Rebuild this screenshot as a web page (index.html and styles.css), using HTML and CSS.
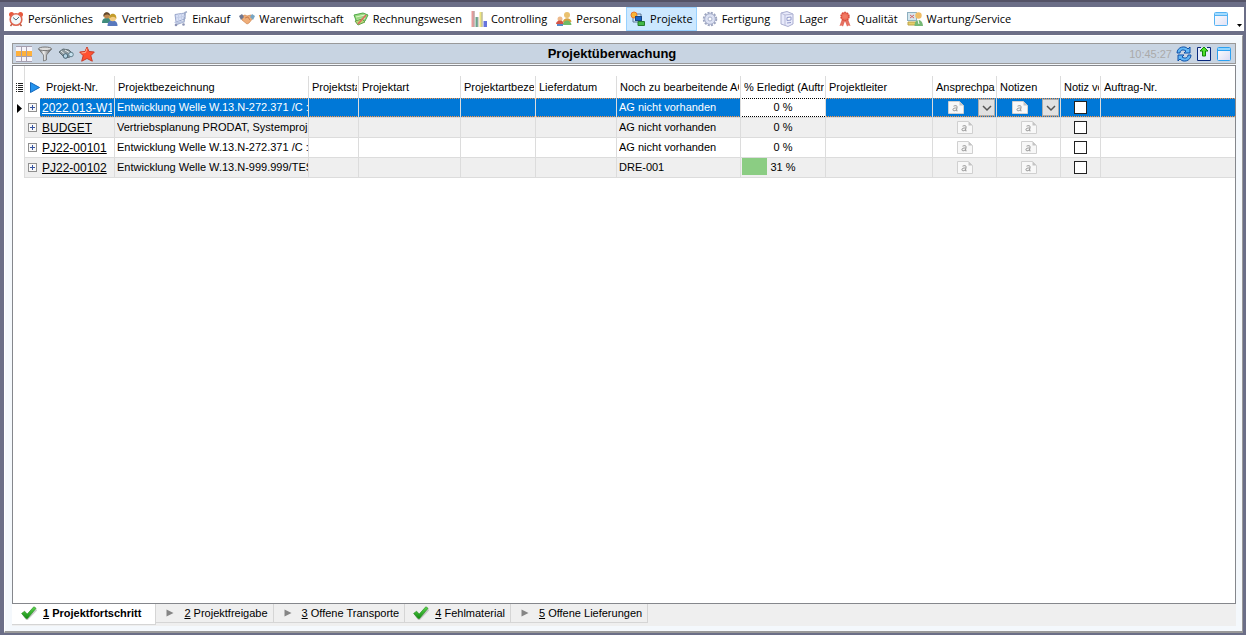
FILE: index.html
```
<!DOCTYPE html>
<html lang="de">
<head>
<meta charset="utf-8">
<title>Projektüberwachung</title>
<link rel="stylesheet" href="styles.css">
</head>
<body>
<svg class="defs" aria-hidden="true">
  <defs>
    <linearGradient id="paper" x1="0" y1="0" x2="1" y2="1"><stop offset="0" stop-color="#fff"/><stop offset="1" stop-color="#d9daf3"/></linearGradient>
    <linearGradient id="metal" x1="0" x2="1"><stop offset="0" stop-color="#555"/><stop offset=".4" stop-color="#eee"/><stop offset="1" stop-color="#444"/></linearGradient>
    <linearGradient id="green" x1="0" y1="0" x2="0" y2="1"><stop offset="0" stop-color="#5fd84f"/><stop offset="1" stop-color="#128a12"/></linearGradient>
    <symbol id="window" viewBox="0 0 16 16"><rect x="1.500" y="1.500" width="13" height="13" rx="1" fill="url(#paper)" stroke="#2ba0f0"/><path d="M2 2h12v2H2z" fill="#8fd4ff"/><path d="M2 4.500h12" stroke="#2ba0f0"/></symbol>
    <symbol id="note" viewBox="0 0 16 13"><path d="M.5.5h11l4 4v8H.5z" fill="#f8f8f8" stroke="#d0d0d0"/><path d="M11.500.5v4h4z" fill="#c4c4c4"/><path d="M5.500 5.200c2-1 4-.6 3.600 1l-.7 3.600M8.800 7c-2-.2-4 .3-3.900 1.800.2 1.600 2.800 1.200 3.700-.5M8.400 9.800h1.200" fill="none" stroke="#999"/></symbol>
    <symbol id="check" viewBox="0 0 16 14"><path d="M2 8l4 5.500 9.500-10" fill="none" stroke="#999" stroke-width="2" opacity=".5"/><path d="M.6 7.400l3-2.200 2.600 2.900L12.800.8l2.300 1.400-8.600 10.400H5z" fill="url(#green)" stroke="#238a1c" stroke-width=".6"/></symbol>
    <symbol id="arrow" viewBox="0 0 8 8"><path d="M.5.5l7 3.500-7 3.500z" fill="#858585"/></symbol>
    <symbol id="chevron" viewBox="0 0 10 8"><path d="M1 2l4 4 4-4" fill="none" stroke="#555" stroke-width="1.500"/></symbol>
    <symbol id="plus" viewBox="0 0 9 9"><rect x=".5" y=".5" width="8" height="8" fill="#f8f8f8" stroke="#909090"/><path d="M2 4.500h5M4.500 2v5" stroke="#3855a0"/></symbol>
  </defs>
</svg>

<nav class="menubar">
  <button class="menu-item"><svg class="icon" viewBox="0 0 16 16"><circle cx="3.500" cy="3.500" r="2.500" fill="#e8583c"/><circle cx="12.500" cy="3.500" r="2.500" fill="#e8583c"/><path d="M4 13l-1.500 2M12 13l1.500 2" stroke="#b95940" stroke-width="1.500"/><circle cx="8" cy="8.500" r="5.800" fill="#f3f8fa" stroke="#df6651" stroke-width="1.600"/><path d="M5 6.500L8 9l3-3" fill="none" stroke="#4b6d7d"/></svg>Persönliches</button>
  <button class="menu-item"><svg class="icon" viewBox="0 0 16 16"><path d="M0 12c0-4 2-5 5-5s4 2 4 5z" fill="#3f8b7c"/><circle cx="4.800" cy="4.500" r="3" fill="#c08a50"/><path d="M1.500 6c-1-6 7-6 6.500-1-2-2-5-2-6.500 1" fill="#62492e"/><path d="M5.500 15c0-4 2-5.500 5-5.500s5 1.500 5 5.500z" fill="#5878bd"/><circle cx="10.800" cy="6.800" r="3.400" fill="#f2cb83"/><path d="M7.300 8c-1-7 8-7 7 0-1.500-3-5-3-7 0" fill="#c39c2b"/></svg>Vertrieb</button>
  <button class="menu-item"><svg class="icon" viewBox="0 0 16 16"><path d="M3 3.500L13 2v6l-9 3z" fill="#d7dff5" stroke="#99a6cb"/><path d="M15 .8l-2 .8-1 9-8 3" fill="none" stroke="#9eabc9" stroke-width="1.500"/><path d="M6.500 3v7M9.500 2.500v7M4 7l9-2" fill="none" stroke="#c4cee8"/><path d="M2 11l8-1 3 1-9 2z" fill="#bcc6e2"/><circle cx="4" cy="14" r="1.300" fill="#8d94b4"/><circle cx="11.500" cy="13.500" r="1.300" fill="#8d94b4"/></svg>Einkauf</button>
  <button class="menu-item"><svg class="icon" viewBox="0 0 16 16"><path d="M3 5l3-1 2 1 4-1 2 3-4 5-2 1-5-4z" fill="#efae79" stroke="#cf8550" stroke-width=".7"/><path d="M0 5l3-2 2 3-3 3z" fill="#6f7893"/><path d="M16 5l-3-2-2 3 3 3z" fill="#77a6c4"/><path d="M6 7l3-1 2 3" stroke="#b96a40" fill="none" stroke-width=".7"/></svg>Warenwirtschaft</button>
  <button class="menu-item"><svg class="icon" viewBox="0 0 16 16"><path d="M1 4l9-2 5 2-3 6-8 2z" fill="#9ad880" stroke="#51a94a"/><path d="M3 6l9-2M4 9l8-2" stroke="#dbf7c9"/><path d="M2 10l3 4 7-3-3-3z" fill="#b8d779" stroke="#62a24a"/><path d="M5 13l8-9" stroke="#e0685c" stroke-width="1.500"/></svg>Rechnungswesen</button>
  <button class="menu-item"><svg class="icon" viewBox="0 0 16 16"><path d="M.5 0h3v16h-3z" fill="#e99a9a"/><path d="M4.500 6h2.500v10H4.500z" fill="#6aa68d"/><path d="M8.500 1h3v15h-3z" fill="#eee57d"/><path d="M12.500 10H16v6h-3.500z" fill="#6674dc"/><path d="M3 0v16M7 6v10M11 1v15" stroke="#a8a8a8"/></svg>Controlling</button>
  <button class="menu-item"><svg class="icon" viewBox="0 0 16 16"><circle cx="11" cy="4" r="3" fill="#eac16e"/><path d="M7 11c0-5 8-5 8.500 0z" fill="#d6a341"/><circle cx="4" cy="8" r="2.500" fill="#edba8b"/><path d="M0 13c0-4 7-5 8 0z" fill="#d55445"/><path d="M7 14c0-6 8-6 8.500 0z" fill="#6fba67"/><path d="M1 14h6" stroke="#5787c9" stroke-width="2"/></svg>Personal</button>
  <button class="menu-item active"><svg class="icon" viewBox="0 0 16 16"><path d="M3 5v6h6M5 3h6v5" fill="none" stroke="#607996"/><circle cx="4" cy="4" r="3" fill="#f9b637" stroke="#e8762d"/><rect x="5.500" y="5.500" width="6" height="4" fill="#1761c6" stroke="#174785"/><path d="M8 10.500h6.500v4H8z" fill="#42b847" stroke="#267c2d"/></svg>Projekte</button>
  <button class="menu-item"><svg class="icon" viewBox="0 0 16 16"><circle cx="8" cy="8" r="6" fill="none" stroke="#9da5c0" stroke-width="2.500" stroke-dasharray="2 1.140"/><circle cx="8" cy="8" r="5.300" fill="#dce1f3" stroke="#a9b1cc"/><circle cx="8" cy="8" r="2" fill="#fff" stroke="#a9b1cc"/></svg>Fertigung</button>
  <button class="menu-item"><svg class="icon" viewBox="0 0 16 16"><path d="M2 2l6-1.500L14 3v10l-5 2.500L2 13z" fill="#e8eafb" stroke="#aaaed0"/><path d="M2 2l4 2 8-1M6 4v10" fill="none" stroke="#b8bbd9"/><path d="M8 6.500l4-.5v3l-4 .5zM8 12l4-.5" fill="#fff" stroke="#9299c9"/></svg>Lager</button>
  <button class="menu-item"><svg class="icon" viewBox="0 0 16 16"><path d="M5 8l-2.500 7 2-.5 1.500 1L8 10l2 5.500 1.500-1 2 .5L11 8z" fill="#e57061"/><circle cx="8" cy="5.500" r="4" fill="#ef705b" stroke="#d84b3b" stroke-width="1.500" stroke-dasharray="1.800 .7"/><circle cx="8" cy="5.500" r="2" fill="#f07c66"/></svg>Qualität</button>
  <button class="menu-item"><svg class="icon" viewBox="0 0 16 16"><rect x=".5" y="1.500" width="9" height="8" fill="#d5e6ed" stroke="#8eafc0"/><path d="M3 4l4 3M7 4L3 7" stroke="#d56565"/><path d="M1 11h8v3H1z" fill="#e7cf6b" stroke="#bba248"/><circle cx="11.500" cy="4.500" r="3.200" fill="#efbd66"/><path d="M7.500 15c0-8 8-8 8.500 0z" fill="#76b875"/><path d="M11 9l1 4" stroke="#fff"/></svg>Wartung/Service</button>
  <span class="menu-end">
    <button class="icon-btn" aria-label="Fenster"><svg class="icon faded"><use href="#window"/></svg></button>
    <button class="more" aria-label="Weitere"><svg class="more-icon" viewBox="0 0 5 3"><path d="M0 0h5L2.500 3z"/></svg></button>
  </span>
</nav>

<main class="panel">
  <header class="titlebar">
    <div class="tools">
      <button class="icon-btn" aria-label="Tabelle"><svg class="icon" viewBox="0 0 16 16"><path d="M0 0h16v16H0z" fill="#a5a0b0"/><path d="M0 1h5v4H0zM6 1h4v4H6zM11 1h5v4h-5zM0 11h5v4H0zM6 11h4v4H6zM11 11h5v4h-5z" fill="#f5f3fa"/><path d="M0 5h5v5H0zM6 5h4v5H6zM11 5h5v5h-5z" fill="#ffb13b"/></svg></button>
      <button class="icon-btn" aria-label="Filter"><svg class="icon" viewBox="0 0 16 16"><path d="M1.500 3L6.500 9v6l3-1V9l5-6z" fill="url(#metal)" stroke="#666" stroke-width=".7"/><ellipse cx="8" cy="2.800" rx="6.500" ry="1.800" fill="#ddd" stroke="#777"/></svg></button>
      <button class="icon-btn" aria-label="Suchen"><svg class="icon" viewBox="0 0 16 16"><path d="M1 6l4-3 6 1 4 4-3 3-5 1z" fill="#8d999e" stroke="#5c6b72"/><path d="M3 5l6 5M7 4l5 3" stroke="#e9eef0"/><circle cx="7.500" cy="10" r="2.300" fill="#b5d4e4" stroke="#496777"/><circle cx="13" cy="8.500" r="2.300" fill="#c8e3f0" stroke="#658290"/></svg></button>
      <button class="icon-btn" aria-label="Favorit"><svg class="icon" viewBox="0 0 16 16"><path d="M8 1l2 4.500 5.300.5-3.500 3.700 1.500 5.500L8 12.500l-5.300 2.700 1.500-5.500L.7 6 6 5.500z" fill="#ff5130" stroke="#c83c28"/><path d="M8 2.500L6.500 6.500 2.500 7" fill="none" stroke="#ffad91"/></svg></button>
    </div>
    <h1 class="title">Projektüberwachung</h1>
    <div class="tools right">
      <time class="clock">10:45:27</time>
      <button class="icon-btn" aria-label="Aktualisieren"><svg class="icon" viewBox="0 0 16 16"><path d="M1 7c0-6 8-8 11-4l2-2v6H8l2-2C7 3 4 4 4 7z" fill="#62b7f5" stroke="#0c4fa8"/><path d="M15 9c0 6-8 8-11 4l-2 2V9h6l-2 2c3 2 6 1 6-2z" fill="#62b7f5" stroke="#0c4fa8"/></svg></button>
      <button class="icon-btn" aria-label="Exportieren"><svg class="icon" viewBox="0 0 16 16"><path d="M5 1.500H1.500v13h13v-13H11" fill="#e4eafa" stroke="#08287c"/><path d="M8 1l4 4H9.500v5h-3V5H4z" fill="#4de02a" stroke="#118409"/></svg></button>
      <button class="icon-btn" aria-label="Maximieren"><svg class="icon"><use href="#window"/></svg></button>
    </div>
  </header>

  <section class="grid">
    <table class="projects">
      <colgroup><col class="c-gutter"><col class="c-tree"><col class="c-nr"><col class="c-name"><col class="c-state"><col class="c-type"><col class="c-typename"><col class="c-date"><col class="c-open"><col class="c-done"><col class="c-lead"><col class="c-note"><col class="c-note"><col class="c-flag"><col></colgroup>
      <thead>
        <tr>
          <th class="gutter"><svg class="list-icon" viewBox="0 0 7 9"><path d="M0 .5h1M2 .5h5M0 2.500h1M2 2.500h5M0 4.500h1M2 4.500h5M0 6.500h1M2 6.500h5M0 8.500h1M2 8.500h5" stroke="#222"/></svg></th>
          <th colspan="2"><div class="head first"><svg class="play" viewBox="0 0 10 11"><path d="M.5.5l9 5-9 5z" fill="#2493ee" stroke="#1268bd"/></svg>Projekt-Nr.</div></th>
          <th><div class="head">Projektbezeichnung</div></th>
          <th><div class="head">Projektstatus</div></th>
          <th><div class="head">Projektart</div></th>
          <th><div class="head">Projektartbezeichnung</div></th>
          <th><div class="head">Lieferdatum</div></th>
          <th><div class="head">Noch zu bearbeitende AG</div></th>
          <th><div class="head">% Erledigt (Auftrag)</div></th>
          <th><div class="head">Projektleiter</div></th>
          <th><div class="head">Ansprechpartner</div></th>
          <th><div class="head">Notizen</div></th>
          <th><div class="head">Notiz vorhanden</div></th>
          <th class="last"><div class="head">Auftrag-Nr.</div></th>
        </tr>
      </thead>
      <tbody>
        <tr class="selected">
          <td class="gutter"><svg class="row-mark" viewBox="0 0 5 9"><path d="M0 0l5 4.500L0 9z"/></svg></td>
          <td class="tree"><button class="expand" aria-label="Aufklappen"><svg class="plus"><use href="#plus"/></svg></button></td>
          <td><div class="cell key"><a class="nr" href="#">2022.013-W13</a></div></td>
          <td><div class="cell">Entwicklung Welle W.13.N-272.371 /C :</div></td>
          <td></td><td></td><td></td><td></td>
          <td><div class="cell">AG nicht vorhanden</div></td>
          <td class="done">0 %</td>
          <td></td>
          <td><div class="editor"><svg class="note"><use href="#note"/></svg><button class="drop" aria-label="Ansprechpartner"><svg class="chevron"><use href="#chevron"/></svg></button></div></td>
          <td><div class="editor"><svg class="note"><use href="#note"/></svg><button class="drop" aria-label="Notizen"><svg class="chevron"><use href="#chevron"/></svg></button></div></td>
          <td class="center"><input class="box" type="checkbox" aria-label="Notiz vorhanden"></td>
          <td class="end"></td>
        </tr>
        <tr class="alt">
          <td class="gutter"></td>
          <td class="tree"><button class="expand" aria-label="Aufklappen"><svg class="plus"><use href="#plus"/></svg></button></td>
          <td><div class="cell key"><a class="nr" href="#">BUDGET</a></div></td>
          <td><div class="cell">Vertriebsplanung PRODAT, Systemproj</div></td>
          <td></td><td></td><td></td><td></td>
          <td><div class="cell">AG nicht vorhanden</div></td>
          <td class="done">0 %</td>
          <td></td>
          <td class="center"><svg class="note"><use href="#note"/></svg></td>
          <td class="center"><svg class="note"><use href="#note"/></svg></td>
          <td class="center"><input class="box" type="checkbox" aria-label="Notiz vorhanden"></td>
          <td class="end"></td>
        </tr>
        <tr>
          <td class="gutter"></td>
          <td class="tree"><button class="expand" aria-label="Aufklappen"><svg class="plus"><use href="#plus"/></svg></button></td>
          <td><div class="cell key"><a class="nr" href="#">PJ22-00101</a></div></td>
          <td><div class="cell">Entwicklung Welle W.13.N-272.371 /C :</div></td>
          <td></td><td></td><td></td><td></td>
          <td><div class="cell">AG nicht vorhanden</div></td>
          <td class="done">0 %</td>
          <td></td>
          <td class="center"><svg class="note"><use href="#note"/></svg></td>
          <td class="center"><svg class="note"><use href="#note"/></svg></td>
          <td class="center"><input class="box" type="checkbox" aria-label="Notiz vorhanden"></td>
          <td class="end"></td>
        </tr>
        <tr class="alt">
          <td class="gutter"></td>
          <td class="tree"><button class="expand" aria-label="Aufklappen"><svg class="plus"><use href="#plus"/></svg></button></td>
          <td><div class="cell key"><a class="nr" href="#">PJ22-00102</a></div></td>
          <td><div class="cell">Entwicklung Welle W.13.N-999.999/TES</div></td>
          <td></td><td></td><td></td><td></td>
          <td><div class="cell">DRE-001</div></td>
          <td class="done"><div class="progress"><div class="bar" style="width:31%"></div><span class="percent">31 %</span></div></td>
          <td></td>
          <td class="center"><svg class="note"><use href="#note"/></svg></td>
          <td class="center"><svg class="note"><use href="#note"/></svg></td>
          <td class="center"><input class="box" type="checkbox" aria-label="Notiz vorhanden"></td>
          <td class="end"></td>
        </tr>
      </tbody>
    </table>
  </section>

  <nav class="tabs">
    <button class="tab current"><svg class="check"><use href="#check"/></svg><span><u>1</u> Projektfortschritt</span></button>
    <button class="tab"><svg class="arrow"><use href="#arrow"/></svg><span><u>2</u> Projektfreigabe</span></button>
    <button class="tab"><svg class="arrow"><use href="#arrow"/></svg><span><u>3</u> Offene Transporte</span></button>
    <button class="tab checked"><svg class="check"><use href="#check"/></svg><span><u>4</u> Fehlmaterial</span></button>
    <button class="tab"><svg class="arrow"><use href="#arrow"/></svg><span><u>5</u> Offene Lieferungen</span></button>
  </nav>
</main>
</body>
</html>
```
FILE: styles.css
```
* { box-sizing: border-box; }
body {
  margin: 0;
  height: 100vh;
  padding: 5px 2px 2px 4px;
  display: flex;
  flex-direction: column;
  gap: 4px;
  background: #6b6e87;
  border-top: 2px solid #545366;
  font: 11px/14px "Liberation Sans", Arial, sans-serif;
  color: #000;
  overflow: hidden;
}
button { margin: 0; padding: 0; border: 0; background: none; font: inherit; color: inherit; }
svg { display: block; flex: none; }
.defs { position: absolute; width: 0; height: 0; }
.icon { width: 16px; height: 16px; }
.icon-btn { display: flex; }

.menubar {
  display: flex;
  align-items: center;
  gap: 1px;
  height: 24px;
  background: #fff;
  font: 11px/16px "Open Sans", "Noto Sans", sans-serif;
}
.menu-item {
  display: flex;
  align-items: center;
  gap: 4px;
  height: 24px;
  padding: 0 3px;
  border: 1px solid transparent;
  white-space: nowrap;
}
.menu-item.active { background: #cce8ff; border-color: #99d1ff; }
.menu-end { display: flex; align-items: center; margin-left: auto; gap: 8px; padding-right: 2px; }
.faded { opacity: .8; }
.more { align-self: flex-end; }
.more-icon { width: 5px; height: 3px; }

.panel {
  flex: 1;
  display: flex;
  flex-direction: column;
  margin-right: 1px;
  padding: 7px 6px 5px 7px;
  background: #f4f8fc;
  border: 1px solid #fff;
  border-right-color: #999;
  border-bottom: 2px solid #999;
}
.titlebar {
  display: grid;
  grid-template-columns: 1fr auto 1fr;
  align-items: center;
  height: 21px;
  padding: 0 3px;
  background: #c8d4e2;
  border: 1px solid #999;
}
.title { margin: 0; padding-right: 24px; font-size: 13px; line-height: 18px; font-weight: bold; }
.tools { display: flex; align-items: center; gap: 5px; }
.right { justify-content: flex-end; gap: 4px; }
.clock { color: #aaa; }

.grid {
  flex: 1;
  margin-top: 1px;
  background: #fff;
  border: 1px solid #85878c;
  overflow: hidden;
}
.projects { width: 100%; table-layout: fixed; border-collapse: separate; border-spacing: 0; }
.c-gutter { width: 12px; }
.c-tree { width: 15px; }
.c-nr { width: 75px; }
.c-name { width: 194px; }
.c-state { width: 50px; }
.c-type { width: 102px; }
.c-typename { width: 75px; }
.c-date { width: 81px; }
.c-open { width: 124px; }
.c-done { width: 85px; }
.c-lead { width: 107px; }
.c-note { width: 64px; }
.c-flag { width: 40px; }
th {
  height: 32px;
  padding: 0;
  font-weight: normal;
  text-align: left;
  vertical-align: bottom;
  background: linear-gradient(#dcdcdc, #dcdcdc) right bottom / 1px 22px no-repeat;
}
th.last { background: none; }
.head {
  height: 22px;
  margin: 0 2px 0 3px;
  line-height: 22px;
  white-space: nowrap;
  overflow: hidden;
}
.first { display: flex; align-items: center; gap: 6px; padding-left: 2px; }
.play { width: 10px; height: 11px; }
td {
  height: 20px;
  padding: 0;
  border-right: 1px solid #dcdcdc;
  border-bottom: 1px solid #dcdcdc;
  overflow: hidden;
  white-space: nowrap;
}
.alt td { background: #efefef; }
.projects .end { border-right: 0; }
.projects .gutter { background: #fff; border-right: 1px solid #dcdcdc; border-bottom: 0; }
th.gutter { padding: 0 0 6px 3px; }
.list-icon { width: 7px; height: 9px; }
.row-mark { width: 5px; height: 9px; margin-left: 4px; }
.projects .tree { border-right: 0; }
.expand { display: flex; margin-left: 3px; }
.plus { width: 9px; height: 9px; }
.cell { margin: 0 0 2px 2px; overflow: hidden; }
.key { margin: 0 2px; }
.nr { color: inherit; font-size: 12px; line-height: 16px; }
.selected {
  color: #fff;
  background-color: #0078d7;
  background-image: linear-gradient(90deg, #ff9440 50%, transparent 50%), linear-gradient(90deg, #ff9440 50%, transparent 50%);
  background-size: 2px 1px;
  background-position: 1px 0, 1px 18px;
  background-repeat: repeat-x;
}
.selected .tree { background: #fff; }
.selected .done {
  color: #000;
  background-color: #fff;
  background-image: linear-gradient(90deg, #000 50%, transparent 50%), linear-gradient(90deg, #000 50%, transparent 50%);
  background-size: 2px 1px;
  background-position: 1px 0, 1px 18px;
  background-repeat: repeat-x;
}
.done { padding-bottom: 2px; text-align: center; }
.progress { display: flex; align-items: center; height: 17px; margin: 0 1px; }
.bar { height: 17px; background: #8bcd83; }
.percent { padding-left: 3px; }
.note { width: 16px; height: 13px; }
.center .note { margin: 0 auto; }
.editor { display: flex; align-items: center; justify-content: space-between; padding: 0 1px 0 15px; }
.drop { display: flex; align-items: center; justify-content: center; width: 17px; height: 17px; background: #e1e1e1; border: 1px solid #adadad; }
.chevron { width: 10px; height: 8px; }
.box { appearance: none; display: block; width: 13px; height: 13px; margin: 0 auto; background: #fff; border: 1px solid #222; }

.tabs { display: flex; align-items: flex-start; height: 22px; background: #efefef; }
.tab {
  display: flex;
  align-items: center;
  gap: 10px;
  height: 19px;
  padding: 0 5px 0 10px;
  border: solid #d5d5d5;
  border-width: 0 1px 1px 0;
  white-space: nowrap;
}
.checked { gap: 6px; padding-left: 8px; }
.current { gap: 6px; height: 21px; padding: 0 14px 2px 9px; background: #fff; font-weight: bold; }
.check { width: 16px; height: 14px; }
.arrow { width: 8px; height: 8px; }
```
